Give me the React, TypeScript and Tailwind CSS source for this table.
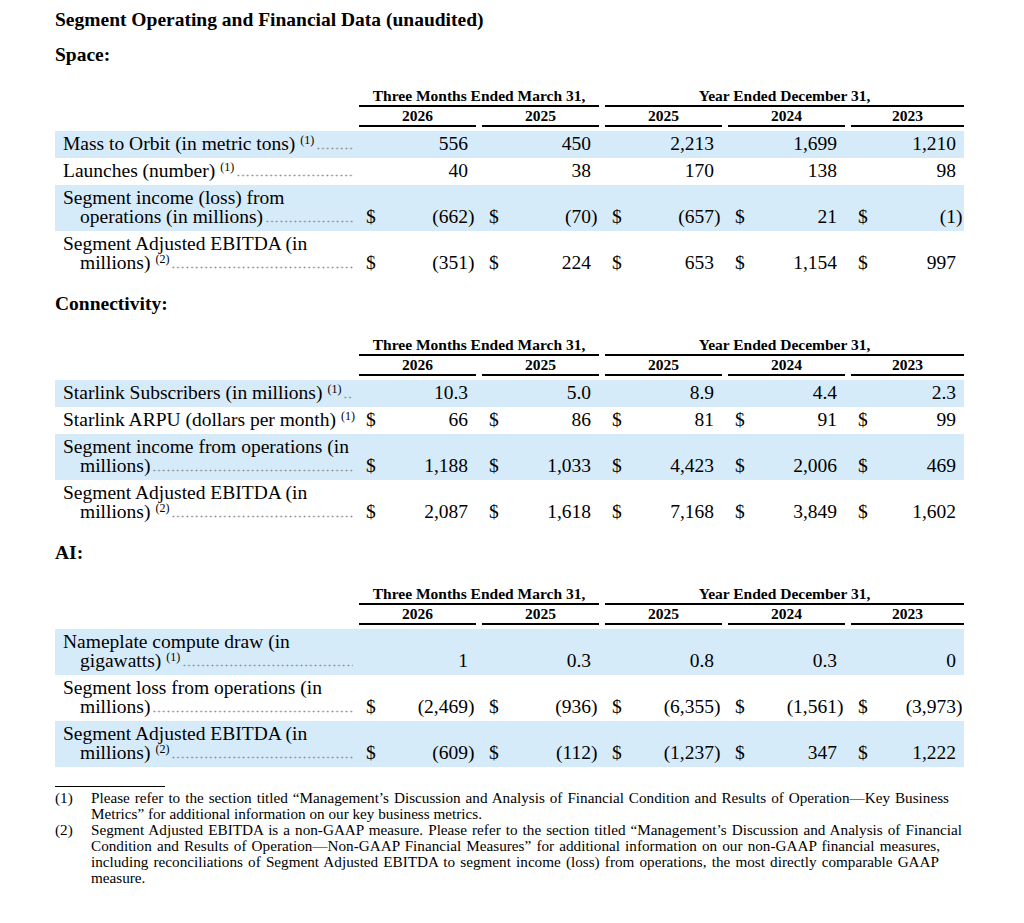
import React from 'react';

type Row = {
  lines: string[];
  note?: string;
  dollar?: boolean;
  values: string[];
  shaded?: boolean;
};

type Section = {
  title: string;
  rows: Row[];
};

const GRID = 'grid w-[909px] grid-cols-[298px_117px_117px_117px_117px_113px] gap-x-[6px]';
const YEARS = ['2026', '2025', '2025', '2024', '2023'];

const sections: Section[] = [
  {
    title: 'Space:',
    rows: [
      { lines: ['Mass to Orbit (in metric tons)'], note: '1', values: ['556', '450', '2,213', '1,699', '1,210'], shaded: true },
      { lines: ['Launches (number)'], note: '1', values: ['40', '38', '170', '138', '98'] },
      {
        lines: ['Segment income (loss) from', 'operations (in millions)'],
        dollar: true,
        values: ['(662)', '(70)', '(657)', '21', '(1)'],
        shaded: true,
      },
      {
        lines: ['Segment Adjusted EBITDA (in', 'millions)'],
        note: '2',
        dollar: true,
        values: ['(351)', '224', '653', '1,154', '997'],
      },
    ],
  },
  {
    title: 'Connectivity:',
    rows: [
      { lines: ['Starlink Subscribers (in millions)'], note: '1', values: ['10.3', '5.0', '8.9', '4.4', '2.3'], shaded: true },
      { lines: ['Starlink ARPU (dollars per month)'], note: '1', dollar: true, values: ['66', '86', '81', '91', '99'] },
      {
        lines: ['Segment income from operations (in', 'millions)'],
        dollar: true,
        values: ['1,188', '1,033', '4,423', '2,006', '469'],
        shaded: true,
      },
      {
        lines: ['Segment Adjusted EBITDA (in', 'millions)'],
        note: '2',
        dollar: true,
        values: ['2,087', '1,618', '7,168', '3,849', '1,602'],
      },
    ],
  },
  {
    title: 'AI:',
    rows: [
      {
        lines: ['Nameplate compute draw (in', 'gigawatts)'],
        note: '1',
        values: ['1', '0.3', '0.8', '0.3', '0'],
        shaded: true,
      },
      {
        lines: ['Segment loss from operations (in', 'millions)'],
        dollar: true,
        values: ['(2,469)', '(936)', '(6,355)', '(1,561)', '(3,973)'],
      },
      {
        lines: ['Segment Adjusted EBITDA (in', 'millions)'],
        note: '2',
        dollar: true,
        values: ['(609)', '(112)', '(1,237)', '347', '1,222'],
        shaded: true,
      },
    ],
  },
];

function Value({ v, dollar }: { v: string; dollar?: boolean }) {
  const neg = v.startsWith('(');
  const num = neg ? v.slice(0, -1) : v;
  return (
    <div className="flex items-end pl-[7px] pr-[1px]">
      <span className="w-[12px]">{dollar ? '$' : ''}</span>
      <span className="flex-1 text-right">{num}</span>
      <span className="w-[7px]">{neg ? ')' : ''}</span>
    </div>
  );
}

function TableHeader() {
  return (
    <div className="text-[15.5px] font-bold leading-[18px]">
      <div className={GRID}>
        <div />
        <div className="col-span-2 text-center border-b-2 border-black">Three Months Ended March 31,</div>
        <div className="col-span-3 text-center border-b-2 border-black">Year Ended December 31,</div>
      </div>
      <div className={GRID}>
        <div />
        {YEARS.map((y, i) => (
          <div key={i} className="text-center border-b-2 border-black">
            {y}
          </div>
        ))}
      </div>
    </div>
  );
}

function DataRow({ row }: { row: Row }) {
  const first = row.lines.slice(0, -1);
  const last = row.lines[row.lines.length - 1];
  return (
    <div className={`${GRID} pt-[3px] pb-[5px] text-[19.5px] leading-[19px] ${row.shaded ? 'bg-[#d6ebfa]' : ''}`}>
      <div className="pl-[8px] flex flex-col">
        {first.map((l, i) => (
          <div key={i} className="whitespace-nowrap">
            {l}
          </div>
        ))}
        <div className={`flex items-baseline ${first.length ? 'pl-[17px]' : ''}`}>
          <span className="whitespace-nowrap">
            {last}
            {row.note && <span className="relative -top-[6px] ml-[5px] text-[12px] leading-none">({row.note})</span>}
          </span>
          {/* dot leader */}
          <span className="flex-1 h-[3px] ml-[2px] bg-[radial-gradient(circle,#8e8e8e_0.75px,transparent_1.15px)] bg-[length:4.7px_3px] bg-repeat-x" />
        </div>
      </div>
      {row.values.map((v, i) => (
        <Value key={i} v={v} dollar={row.dollar} />
      ))}
    </div>
  );
}

function Line({ w, children }: { w: string; children: React.ReactNode }) {
  return <div className={`${w} text-justify [text-align-last:justify]`}>{children}</div>;
}

export default function App() {
  return (
    <div className="w-[1024px] min-h-[923px] bg-white text-black font-['Liberation_Serif','Times_New_Roman',serif] pl-[55px] pt-[8px]">
      <h1 className="text-[19.5px] font-bold leading-[24px]">Segment Operating and Financial Data (unaudited)</h1>

      {sections.map((s, i) => (
        <section key={s.title} className={i === 0 ? 'mt-[12px]' : 'mt-[16px]'}>
          <h2 className="text-[19.5px] font-bold leading-[22px]">{s.title}</h2>
          <div className="mt-[21px]">
            <TableHeader />
          </div>
          <div className="mt-[4px]">
            {s.rows.map((r, j) => (
              <DataRow key={j} row={r} />
            ))}
          </div>
        </section>
      ))}

      <div className="mt-[19px] w-[110px] border-t border-black" />
      <div className="mt-[3px] text-[15.2px] leading-[16px] whitespace-nowrap">
        <div className="flex">
          <span className="w-[36px]">(1)</span>
          <div>
            <Line w="w-[858px]">
              Please refer to the section titled “Management’s Discussion and Analysis of Financial Condition and Results of
              Operation—Key Business
            </Line>
            <div>Metrics” for additional information on our key business metrics.</div>
          </div>
        </div>
        <div className="flex">
          <span className="w-[36px]">(2)</span>
          <div>
            <Line w="w-[871px]">
              Segment Adjusted EBITDA is a non-GAAP measure. Please refer to the section titled “Management’s Discussion and
              Analysis of Financial
            </Line>
            <Line w="w-[849px]">
              Condition and Results of Operation—Non-GAAP Financial Measures” for additional information on our non-GAAP
              financial measures,
            </Line>
            <Line w="w-[848px]">
              including reconciliations of Segment Adjusted EBITDA to segment income (loss) from operations, the most directly
              comparable GAAP
            </Line>
            <div>measure.</div>
          </div>
        </div>
      </div>
    </div>
  );
}
